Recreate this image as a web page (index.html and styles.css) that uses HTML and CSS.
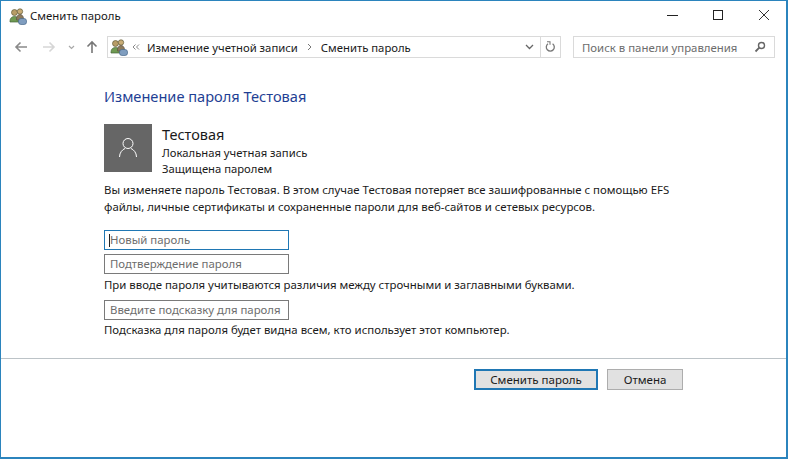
FILE: index.html
```html
<!DOCTYPE html>
<html lang="ru">
<head>
<meta charset="utf-8">
<title>Сменить пароль</title>
<link rel="stylesheet" href="styles.css">
</head>
<body>
<div class="window">
  <svg width="0" height="0" class="defs">
    <defs>
      <g id="users">
        <circle cx="5.500" cy="4.500" r="3" fill="#b79c66" stroke="#5f5a38" stroke-width=".7"/>
        <path d="M1 13c0-3 2-4.500 4.500-4.500S10 10 10 13v1H1z" fill="#6f9a52" stroke="#46663a" stroke-width=".7"/>
        <circle cx="11" cy="3.500" r="2.700" fill="#c9ac76" stroke="#5f5a38" stroke-width=".7"/>
        <path d="M7.500 11c0-3 1.500-4.500 3.500-4.500s3.500 1.500 3.500 4.500v1h-7z" fill="#8c7a5c" stroke="#5f5040" stroke-width=".7"/>
        <rect x="9.500" y="10.500" width="8" height="6" rx="2.500" fill="#7f9dbf" stroke="#4a6a8c" stroke-width=".7"/>
      </g>
    </defs>
  </svg>
  <header class="titlebar">
    <svg class="app-icon" width="18" height="17" viewBox="0 0 18 17"><use href="#users"/></svg>
    <span class="title">Сменить пароль</span>
    <div class="caption">
      <svg class="cap" width="46" height="12" viewBox="0 0 46 12"><path d="M18 6.500h11" stroke="#222" fill="none"/></svg>
      <svg class="cap" width="46" height="12" viewBox="0 0 46 12"><rect x="18.500" y="1.500" width="9" height="9" stroke="#222" fill="none"/></svg>
      <svg class="cap" width="46" height="12" viewBox="0 0 46 12"><path d="M18 1l10 10M28 1L18 11" stroke="#333" fill="none"/></svg>
    </div>
  </header>
  <nav class="navbar">
    <div class="nav-buttons">
      <svg width="14" height="12" viewBox="0 0 14 12"><path d="M13 6H2M6.500 1.500L2 6l4.500 4.500" stroke="#8a8a8a" stroke-width="1.600" fill="none"/></svg>
      <svg width="14" height="12" viewBox="0 0 14 12"><path d="M1 6h11M7.500 1.500L12 6l-4.500 4.500" stroke="#d6d6d6" stroke-width="1.600" fill="none"/></svg>
      <svg width="7" height="5" viewBox="0 0 7 5"><path d="M1 1l2.500 2.500L6 1" stroke="#a8a8a8" stroke-width="1.200" fill="none"/></svg>
      <svg width="12" height="14" viewBox="0 0 12 14"><path d="M6 13V2M1.500 6.500L6 2l4.500 4.500" stroke="#777" stroke-width="1.600" fill="none"/></svg>
    </div>
    <div class="address">
      <svg class="addr-icon" width="18" height="17" viewBox="0 0 18 17"><use href="#users"/></svg>
      <svg class="crumb-more" width="8" height="6" viewBox="0 0 8 6"><path d="M3.500 .5L1 3l2.500 2.500M7 .5L4.500 3 7 5.500" stroke="#888" fill="none"/></svg>
      <span class="crumb">Изменение учетной записи</span>
      <svg class="crumb-sep" width="5" height="8" viewBox="0 0 5 8"><path d="M1 1l3 3-3 3" stroke="#777" fill="none"/></svg>
      <span class="crumb">Сменить пароль</span>
      <svg class="addr-drop" width="9" height="6" viewBox="0 0 9 6"><path d="M1 1l3.500 3.500L8 1" stroke="#666" stroke-width="1.300" fill="none"/></svg>
      <span class="addr-refresh">
        <svg width="11" height="12" viewBox="0 0 11 12"><path d="M3 2.800a4 4 0 1 0 4.600 0" stroke="#777" stroke-width="1.300" fill="none"/><path d="M2 .8h3v3" stroke="#777" stroke-width="1.100" fill="none"/></svg>
      </span>
    </div>
    <div class="search">
      <span>Поиск в панели управления</span>
      <svg width="12" height="12" viewBox="0 0 12 12"><circle cx="7.500" cy="4.500" r="3" stroke="#666" stroke-width="1.400" fill="none"/><path d="M5.300 6.700L1.500 10.500" stroke="#666" stroke-width="1.800"/></svg>
    </div>
  </nav>
  <main class="content">
    <h1 class="heading">Изменение пароля Тестовая</h1>
    <section class="account">
      <div class="avatar">
        <svg width="22" height="24" viewBox="0 0 22 24"><circle cx="11" cy="7.500" r="5" stroke="#fff" fill="none"/><path d="M2.500 21c0-4.500 3-7.500 5.500-8.500M19.500 21c0-4.500-3-7.500-5.500-8.500" stroke="#fff" fill="none"/></svg>
      </div>
      <div class="account-info">
        <div class="account-name">Тестовая</div>
        <div class="account-line">Локальная учетная запись</div>
        <div class="account-line">Защищена паролем</div>
      </div>
    </section>
    <p class="warning">Вы изменяете пароль Тестовая. В этом случае Тестовая потеряет все зашифрованные с помощью EFS<br>файлы, личные сертификаты и сохраненные пароли для веб-сайтов и сетевых ресурсов.</p>
    <div class="field field-focus"><span class="caret"></span>Новый пароль</div>
    <div class="field field-second">Подтверждение пароля</div>
    <p class="note">При вводе пароля учитываются различия между строчными и заглавными буквами.</p>
    <div class="field field-hint">Введите подсказку для пароля</div>
    <p class="note note-last">Подсказка для пароля будет видна всем, кто использует этот компьютер.</p>
  </main>
  <footer class="footer">
    <button class="btn btn-default">Сменить пароль</button>
    <button class="btn btn-cancel">Отмена</button>
  </footer>
</div>
</body>
</html>
```
FILE: styles.css
```css
* { box-sizing: border-box; }
html, body { margin: 0; height: 100%; background: #fff; }
body { font-family: "Noto Sans", "Open Sans", sans-serif; font-size: 12px; color: #1a1a1a; overflow: hidden; }
.defs { position: absolute; }
.window { width: 788px; height: 459px; border: 1px solid #2b84bd; border-bottom-width: 2px; border-right-width: 2px; display: flex; flex-direction: column; }
.titlebar { height: 28px; display: flex; align-items: center; padding-left: 8px; flex: none; }
.app-icon { flex: none; margin-top: 2px; }
.title { margin-left: 3px; font-size: 11.400px; line-height: 16px; margin-top: 2px; }
.caption { margin-left: auto; display: flex; margin-right: -1px; margin-top: -1px; }
.cap { display: block; }
.navbar { height: 22px; margin-top: 7px; display: flex; align-items: stretch; padding-left: 13px; flex: none; }
.nav-buttons { width: 93px; display: flex; align-items: center; }
.nav-buttons svg:nth-child(1) { margin-right: 14px; }
.nav-buttons svg:nth-child(2) { margin-right: 12px; }
.nav-buttons svg:nth-child(3) { margin-right: 11px; }
.address { width: 454px; border: 1px solid #dadada; display: flex; align-items: center; padding-left: 2px; }
.addr-icon { flex: none; }
.crumb-more { margin: 0 7px 0 4px; flex: none; }
.crumb { font-size: 11.300px; white-space: nowrap; }
.crumb-sep { margin: 0 9px 0 9px; flex: none; }
.addr-drop { margin-left: auto; margin-right: 6px; flex: none; }
.addr-refresh { width: 20px; align-self: stretch; border-left: 1px solid #dadada; display: flex; align-items: center; justify-content: center; }
.search { width: 202px; margin-left: 12px; border: 1px solid #dadada; display: flex; align-items: center; justify-content: space-between; padding: 0 8px; color: #6d6d6d; font-size: 11.400px; white-space: nowrap; }
.content { padding: 28px 0 0 103px; flex: 1; }
.heading { margin: 0; font-size: 14.600px; font-weight: 400; line-height: 20px; color: #1f3f94; }
.account { display: flex; margin-top: 18px; height: 48px; }
.avatar { width: 48px; height: 48px; background: #666; display: flex; align-items: center; justify-content: center; flex: none; }
.account-info { margin-left: 10px; }
.account-name { font-size: 14.500px; line-height: 21px; }
.account-line { font-size: 11.250px; line-height: 16px; }
.warning { margin: 9px 0 0; line-height: 17px; font-size: 11.400px; white-space: nowrap; }
.field { width: 185px; height: 20px; border: 1px solid #7a7a7a; color: #6d6d6d; font-size: 11.400px; line-height: 18px; padding-left: 5px; position: relative; white-space: nowrap; }
.field-focus { margin-top: 15px; border-color: #1f77b4; }
.field-second { margin-top: 4px; }
.field-hint { margin-top: 7px; }
.caret { position: absolute; left: 4px; top: 3px; width: 1px; height: 13px; background: #222; }
.note { margin: 3px 0 0; font-size: 11.400px; line-height: 16px; white-space: nowrap; }
.note-last { margin-top: 2px; }
.footer { height: 99px; flex: none; border-top: 1px solid #bcc3c7; display: flex; align-items: flex-start; padding: 10px 0 0 473px; }
.btn { font: inherit; font-size: 11.500px; color: #1a1a1a; background: #e1e1e1; border: 1px solid #adadad; height: 21px; padding: 0; }
.btn-default { width: 124px; border: 2px solid #1f77b4; }
.btn-cancel { width: 76px; margin-left: 9px; }
```
